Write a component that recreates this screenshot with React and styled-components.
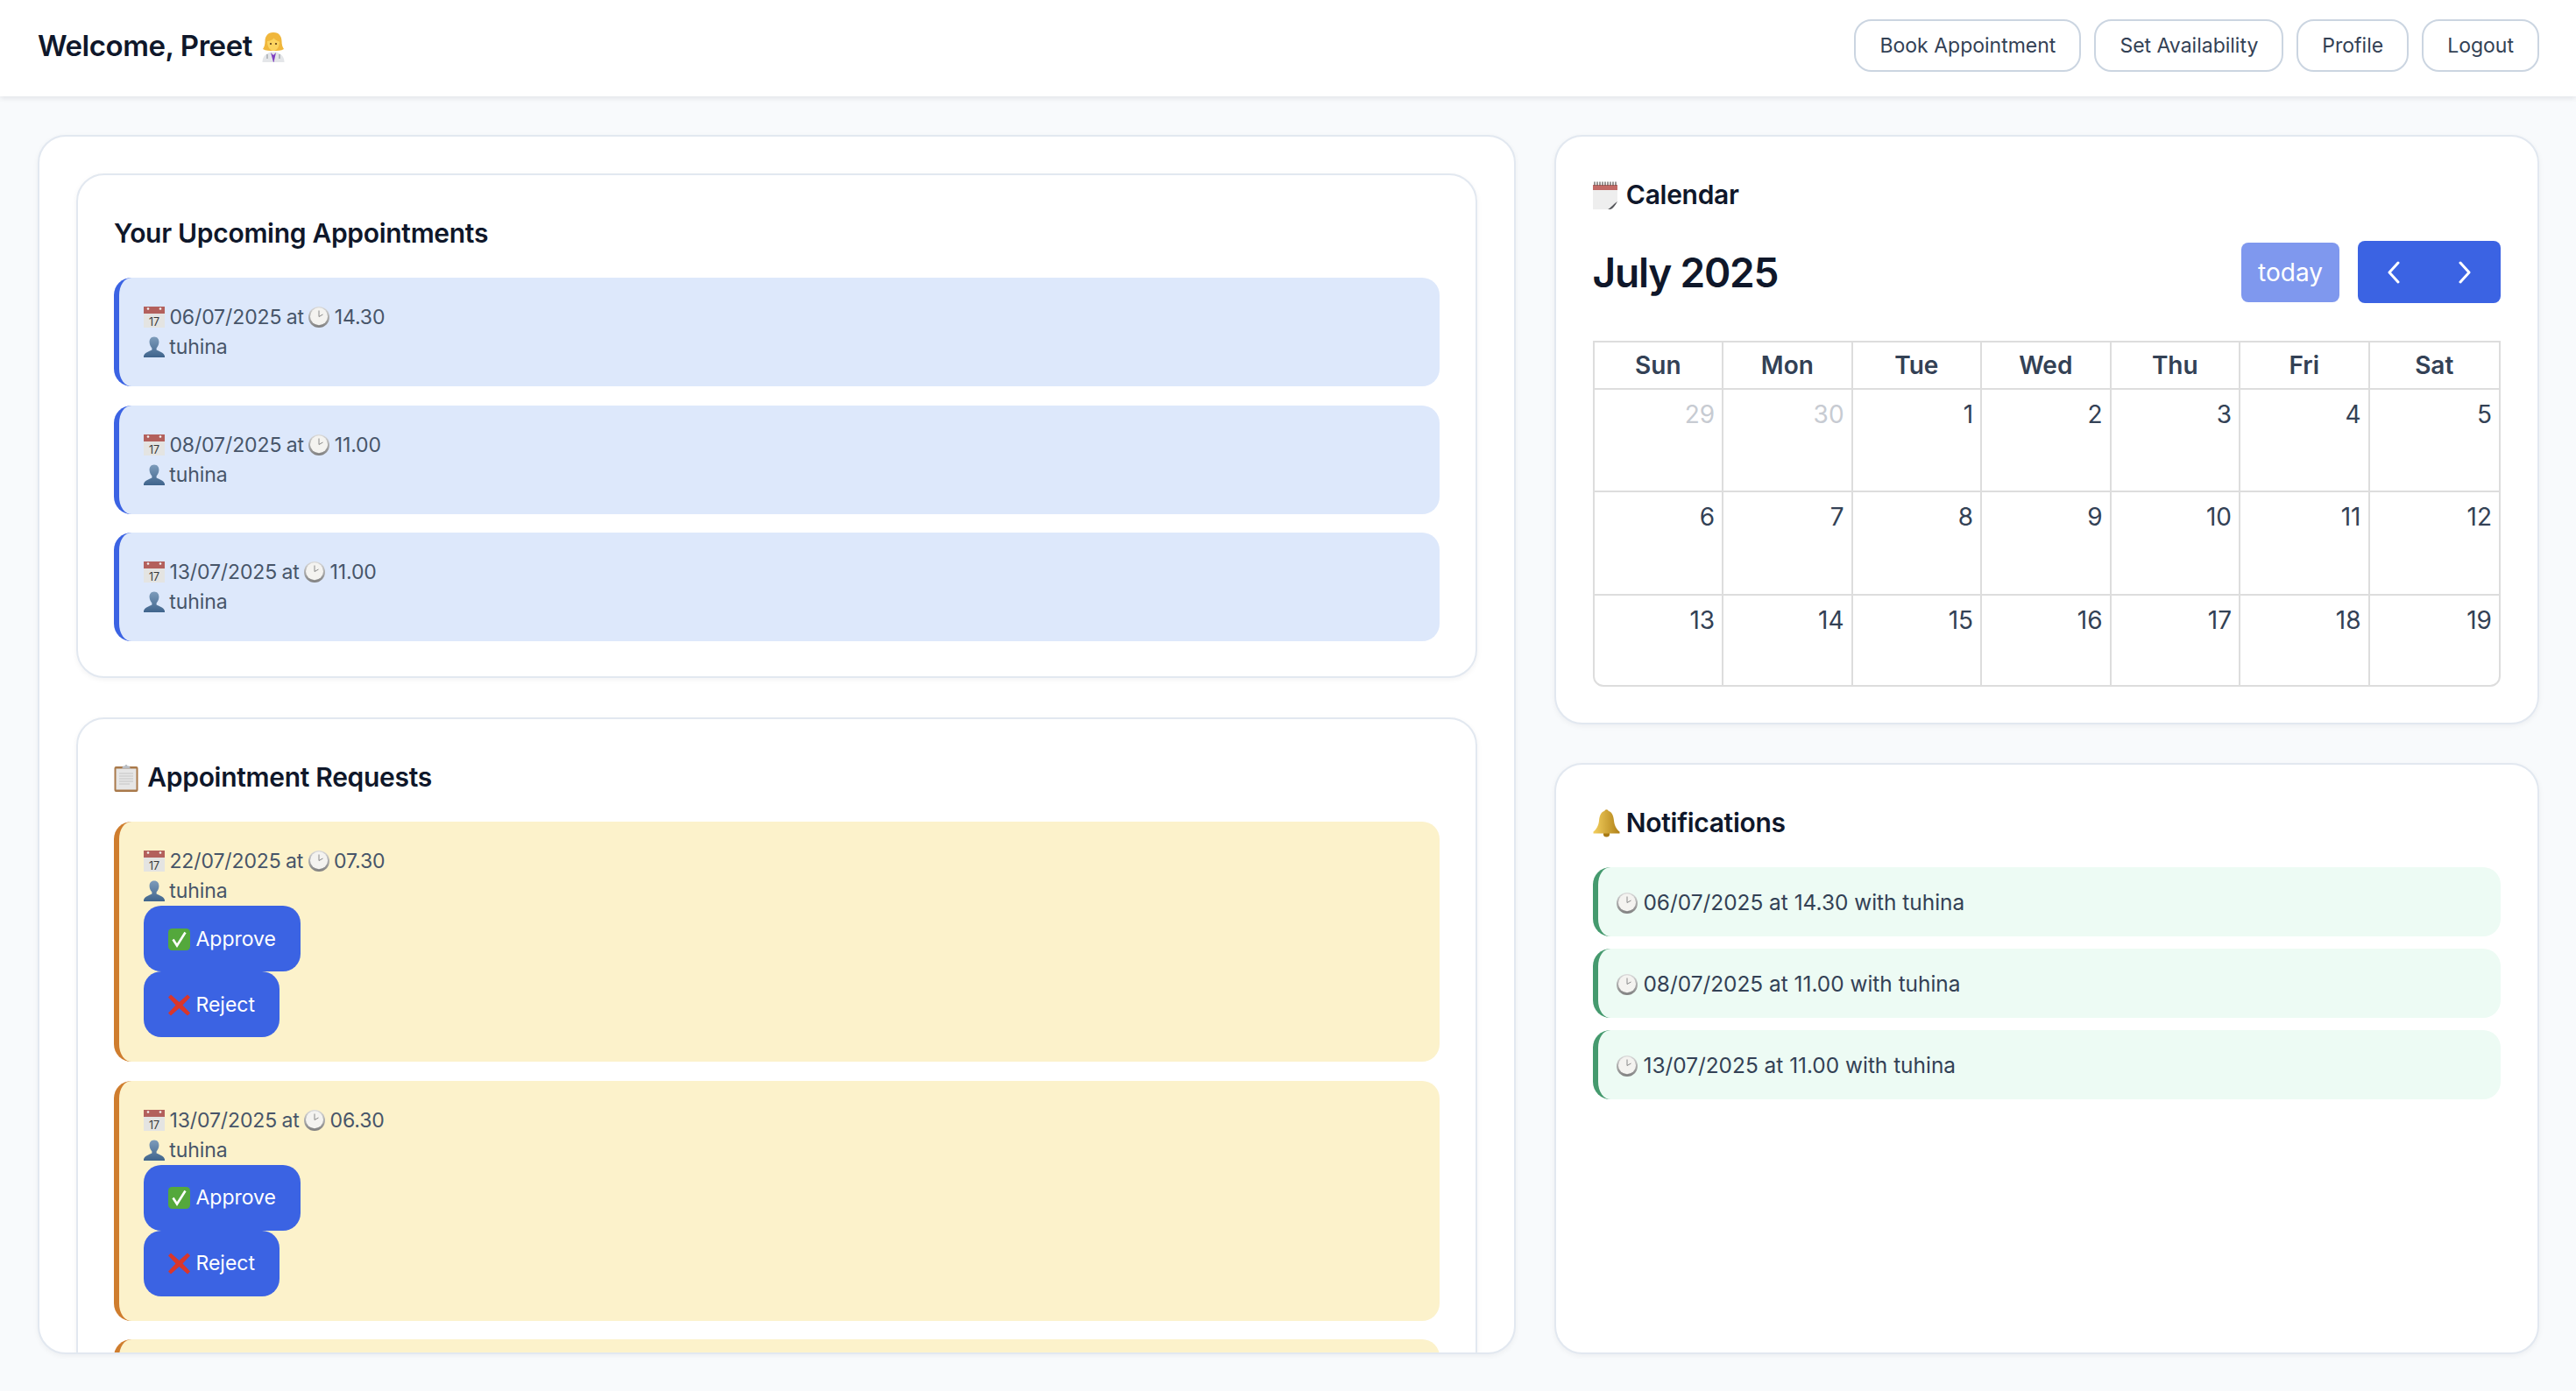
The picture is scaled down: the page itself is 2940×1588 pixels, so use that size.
import React from "react"
import styled, { createGlobalStyle } from "styled-components"

const Global = createGlobalStyle`
  * {
    box-sizing: border-box;
  }
  html, body {
    margin: 0;
    height: 100%;
    overflow: hidden;
  }
  body {
    background: #f8fafc;
    font-family: Inter, "Liberation Sans", sans-serif;
    color: #0f172a;
  }
`

const Page = styled.div`
  height: 100vh;
  display: flex;
  flex-direction: column;
`

const Header = styled.header`
  height: 110px;
  flex: none;
  display: flex;
  align-items: center;
  justify-content: space-between;
  padding: 0 42px 6px 43px;
  background: #fff;
  box-shadow: 0 2px 6px rgba(15, 23, 42, 0.1);
`

const Welcome = styled.h1`
  margin: 0;
  font-size: 33px;
  font-weight: 600;
  line-height: 46px;
  letter-spacing: -0.45px;
`

const HeaderActions = styled.nav`
  display: flex;
  gap: 15px;
`

const HeaderButton = styled.button`
  height: 60px;
  padding: 0 27px;
  background: #fff;
  border: 2px solid #cbd5e1;
  border-radius: 20px;
  color: #334155;
  font: 400 23px Inter, sans-serif;
`

const Main = styled.main`
  flex: 1;
  min-height: 0;
  display: grid;
  grid-template-columns: 3fr 2fr;
  gap: 44px;
  padding: 44px 42px 42px 43px;
`

const Panel = styled.section`
  background: #fff;
  border: 2px solid #e2e8f0;
  border-radius: 32px;
  box-shadow: 0 2px 6px rgba(15, 23, 42, 0.05);
  padding: 42px;
`

const LeftPanel = styled(Panel)`
  overflow: hidden;
  padding-bottom: 0;
`

const CalendarPanel = styled(Panel)`
  padding-bottom: 41px;
`

const RightColumn = styled.div`
  display: flex;
  flex-direction: column;
  gap: 44px;
  min-height: 0;
`

const NotificationsPanel = styled(Panel)`
  flex: 1;
`

const InnerCard = styled(Panel)`
  padding: 42px 41px 40px;
  margin-bottom: 45px;
`

const Heading = styled.h2`
  margin: 0 0 ${({ $gap }) => $gap || 27}px;
  font-size: 30px;
  font-weight: 600;
  line-height: 48px;
  letter-spacing: -0.3px;
`

const ItemList = styled.div`
  display: flex;
  flex-direction: column;
  gap: ${({ $gap }) => $gap}px;
`

const Item = styled.div`
  background: ${({ $bg }) => $bg};
  border-left: 6px solid ${({ $accent }) => $accent};
  border-radius: 20px;
  padding: 28px 28px;
  min-height: ${({ $minHeight }) => $minHeight || 0}px;
  color: #475569;
  font-size: 23px;
  line-height: 34px;
  letter-spacing: -0.1px;
  word-spacing: -1px;
`

const NoticeItem = styled(Item)`
  padding: 22.5px 21px;
  color: #334155;
  background: #edfbf4;
  border-left-color: #459a6e;
  font-size: 24.4px;
  letter-spacing: 0;
  word-spacing: 0;
`

const Line = styled.div``

const ActionButton = styled.button`
  display: block;
  height: 75px;
  padding: 0 28px;
  background: #3b63e3;
  color: #fff;
  border: 0;
  border-radius: 20px;
  font: 400 23px Inter, sans-serif;
`

const Toolbar = styled.div`
  display: flex;
  align-items: center;
  justify-content: space-between;
  height: 71px;
  margin-bottom: 43px;
`

const MonthTitle = styled.h2`
  margin: 0;
  font-size: 46px;
  font-weight: 600;
  letter-spacing: -1.2px;
`

const ToolbarRight = styled.div`
  display: flex;
  align-items: center;
  gap: 21px;
`

const TodayButton = styled.button`
  width: 112px;
  height: 68px;
  background: #7f98ee;
  border: 0;
  border-radius: 8px;
  color: #fff;
  font: 400 28px Inter, sans-serif;
`

const NavGroup = styled.div`
  display: flex;
  height: 71px;
  border-radius: 8px;
  overflow: hidden;
`

const NavButton = styled.button`
  width: 81.5px;
  display: flex;
  align-items: center;
  justify-content: center;
  background: #3b63e3;
  border: 0;
`

const CalendarFrame = styled.div`
  height: 395px;
  display: grid;
  grid-template-columns: repeat(7, 1fr);
  grid-template-rows: 54px 117px 118px 1fr;
  border: 2px solid #ddd;
  border-radius: 0 0 12px 12px;
  overflow: hidden;
  color: #334155;
`

const DayHead = styled.div`
  display: flex;
  align-items: center;
  justify-content: center;
  border-bottom: 2px solid #ddd;
  border-right: ${({ $last }) => ($last ? 0 : "2px solid #ddd")};
  font-size: 28px;
  font-weight: 600;
`

const DayCell = styled.div`
  padding: 7px 8px;
  text-align: right;
  font-size: 28px;
  line-height: 42px;
  color: ${({ $muted }) => ($muted ? "#c7cbd2" : "#334155")};
  border-right: ${({ $last }) => ($last ? 0 : "2px solid #ddd")};
  border-bottom: ${({ $bottom }) => ($bottom ? 0 : "2px solid #ddd")};
`

const Glyph = styled.svg`
  display: inline-block;
  vertical-align: ${({ $drop }) => $drop || -4}px;
  margin-left: ${({ $before }) => $before || 0}px;
  margin-right: ${({ $after }) => $after || 0}px;
`

const CalendarIcon = () => (
  <Glyph width="24" height="24" viewBox="0 0 24 24">
    <rect x="0" y="6" width="24" height="18" fill="#e4e4e2" />
    <rect x="0" y="0" width="24" height="8" fill="#b3605c" />
    <circle cx="5" cy="2.5" r="1.3" fill="#f3f3f3" />
    <circle cx="19" cy="2.5" r="1.3" fill="#f3f3f3" />
    <text x="12" y="21.5" textAnchor="middle" fontFamily="Inter" fontSize="12.5" fill="#3a3a3a">17</text>
  </Glyph>
)

const ClockIcon = () => (
  <Glyph width="24" height="24" viewBox="0 0 24 24">
    <defs>
      <linearGradient id="clockRim" x1="0" y1="0" x2="0" y2="1">
        <stop offset="0" stopColor="#dcdcdc" />
        <stop offset="1" stopColor="#7f7f7f" />
      </linearGradient>
    </defs>
    <circle cx="12" cy="12" r="12" fill="url(#clockRim)" />
    <circle cx="12" cy="11.3" r="10" fill="#f4f3f0" />
    <path d="M12 4.5V11.5L16.5 9" stroke="#8a8a8a" strokeWidth="1" fill="none" />
  </Glyph>
)

const BustIcon = () => (
  <Glyph width="24" height="24" viewBox="0 0 24 24">
    <defs>
      <linearGradient id="bustFill" x1="0" y1="0" x2="0" y2="1">
        <stop offset="0" stopColor="#7d9cbb" />
        <stop offset="1" stopColor="#3f648c" />
      </linearGradient>
    </defs>
    <path
      d="M12 0.5C8.2 0.5 6.4 3.4 6.6 7C6.8 10 8.2 12.2 9.4 13.4V15.4C7 17 1 17.8 0 22.5V24H24V22.5C23 17.8 17 17 14.6 15.4V13.4C15.8 12.2 17.2 10 17.4 7C17.6 3.4 15.8 0.5 12 0.5Z"
      fill="url(#bustFill)"
    />
  </Glyph>
)

const DoctorIcon = () => (
  <Glyph width="26" height="34" viewBox="0 0 26 34" $drop={-7} $before={3}>
    <path d="M13 0C6 0 3.5 5 3.5 10C3.5 14 2.5 17 1 19C4 21 9 21 13 21C17 21 22 21 25 19C23.5 17 22.5 14 22.5 10C22.5 5 20 0 13 0Z" fill="#f0b73c" />
    <path d="M6 10C9 10 12 8.5 13.5 6.5C15 8.5 17.5 10 20 10.5C20 17 16.5 21 13 21C9.5 21 6 17 6 10Z" fill="#fcd460" />
    <circle cx="10" cy="13" r="1.1" fill="#5a3b1a" />
    <circle cx="16" cy="13" r="1.1" fill="#5a3b1a" />
    <path d="M0.5 34C0.5 27 5 24 9.5 22.5H16.5C21 24 25.5 27 25.5 34Z" fill="#e4e6e9" />
    <path d="M10 23L13 34H13.5L16 23L13 26Z" fill="#7f3fc0" />
    <path d="M6 25V30M20 25V30" stroke="#8a8f96" strokeWidth="1" />
  </Glyph>
)

const TearCalendarIcon = () => (
  <Glyph width="28" height="32" viewBox="0 0 28 32" $drop={-6} $after={3}>
    <rect x="0" y="4" width="28" height="28" fill="#eeeeee" />
    <rect x="0" y="4" width="28" height="6" fill="#c26a66" />
    <path d="M2 0.5V5M5 0.5V5M8 0.5V5M11 0.5V5M14 0.5V5M17 0.5V5M20 0.5V5M23 0.5V5M26 0.5V5" stroke="#55524f" strokeWidth="1.2" />
    <path d="M17 32C22 31 24 27 28 23V32Z" fill="#ffffff" />
    <path d="M17 32C21 30 23 26 28 23C25 28 23 31 20 32Z" fill="#55565a" />
  </Glyph>
)

const ClipboardIcon = () => (
  <Glyph width="28" height="32" viewBox="0 0 28 32" $drop={-6} $after={3}>
    <rect x="0.5" y="3" width="27" height="29" rx="2" fill="#a9794a" />
    <rect x="2.5" y="5.5" width="23" height="24" fill="#e6e6e6" />
    <path d="M6 11H22M6 14H22M6 17H22M6 20H22M6 23H18" stroke="#cfcfcf" strokeWidth="1.4" />
    <path d="M9 5.5L10.5 2.5H12.5C12.7 0.6 15.3 0.6 15.5 2.5H17.5L19 5.5Z" fill="#b8bcc2" />
  </Glyph>
)

const BellIcon = () => (
  <Glyph width="31" height="32" viewBox="0 0 31 32" $drop={-6}>
    <defs>
      <linearGradient id="bellFill" x1="0" y1="0" x2="1" y2="0">
        <stop offset="0" stopColor="#f3cf5e" />
        <stop offset="1" stopColor="#b08118" />
      </linearGradient>
    </defs>
    <circle cx="15.5" cy="28" r="3.6" fill="#a87a14" />
    <circle cx="15.5" cy="2.4" r="2.2" fill="#c99a28" />
    <path d="M15.5 1.5C9.5 1.5 7.5 7 7 13C6.6 18 4 23 0.5 25.5V27.5H30.5V25.5C27 23 24.4 18 24 13C23.5 7 21.5 1.5 15.5 1.5Z" fill="url(#bellFill)" />
  </Glyph>
)

const CheckIcon = () => (
  <Glyph width="25" height="25" viewBox="0 0 25 25" $drop={-5}>
    <rect x="0" y="0" width="25" height="25" rx="4.5" fill="#54a83c" />
    <path d="M5.5 12.5L10 19.5L19.5 4.5" stroke="#fff" strokeWidth="2.6" fill="none" />
  </Glyph>
)

const CrossIcon = () => (
  <Glyph width="25" height="25" viewBox="0 0 25 25" $drop={-5}>
    <path d="M3 0.5L12.5 9L22 0.5L25 3.5L16.5 12.5L25 21.5L22 24.5L12.5 16L3 24.5L0 21.5L8.5 12.5L0 3.5Z" fill="#d9362b" />
  </Glyph>
)

const ChevronIcon = ({ flip }) => (
  <svg width="14" height="26" viewBox="0 0 14 26">
    <path d={flip ? "M12 2L2 13L12 24" : "M2 2L12 13L2 24"} stroke="#fff" strokeWidth="3" strokeLinecap="round" strokeLinejoin="round" fill="none" />
  </svg>
)

const upcoming = [
  { date: "06/07/2025", time: "14.30" },
  { date: "08/07/2025", time: "11.00" },
  { date: "13/07/2025", time: "11.00" },
]

const requests = [
  { date: "22/07/2025", time: "07.30" },
  { date: "13/07/2025", time: "06.30" },
]

const days = ["Sun", "Mon", "Tue", "Wed", "Thu", "Fri", "Sat"]
const dates = [29, 30, 1, 2, 3, 4, 5, 6, 7, 8, 9, 10, 11, 12, 13, 14, 15, 16, 17, 18, 19]

const Details = ({ date, time }) => (
  <>
    <Line>
      <CalendarIcon /> {date} at <ClockIcon /> {time}
    </Line>
    <Line>
      <BustIcon /> tuhina
    </Line>
  </>
)

export default function App() {
  return (
    <Page>
      <Global />
      <Header>
        <Welcome>
          Welcome, Preet <DoctorIcon />
        </Welcome>
        <HeaderActions>
          <HeaderButton>Book Appointment</HeaderButton>
          <HeaderButton>Set Availability</HeaderButton>
          <HeaderButton>Profile</HeaderButton>
          <HeaderButton>Logout</HeaderButton>
        </HeaderActions>
      </Header>
      <Main>
        <LeftPanel>
          <InnerCard>
            <Heading>Your Upcoming Appointments</Heading>
            <ItemList $gap={21.5}>
              {upcoming.map((a) => (
                <Item key={a.date} $bg="#dde8fb" $accent="#3b63e3">
                  <Details {...a} />
                </Item>
              ))}
            </ItemList>
          </InnerCard>
          <InnerCard>
            <Heading>
              <ClipboardIcon /> Appointment Requests
            </Heading>
            <ItemList $gap={21.5}>
              {requests.map((a, i) => (
                <Item key={i} $bg="#fcf2cb" $accent="#cf7d2e">
                  <Details {...a} />
                  <ActionButton>
                    <CheckIcon /> Approve
                  </ActionButton>
                  <ActionButton>
                    <CrossIcon /> Reject
                  </ActionButton>
                </Item>
              ))}
              <Item $bg="#fcf2cb" $accent="#cf7d2e" $minHeight={274} />
            </ItemList>
          </InnerCard>
        </LeftPanel>
        <RightColumn>
          <CalendarPanel>
            <Heading $gap={29}>
              <TearCalendarIcon /> Calendar
            </Heading>
            <Toolbar>
              <MonthTitle>July 2025</MonthTitle>
              <ToolbarRight>
                <TodayButton>today</TodayButton>
                <NavGroup>
                  <NavButton>
                    <ChevronIcon flip />
                  </NavButton>
                  <NavButton>
                    <ChevronIcon />
                  </NavButton>
                </NavGroup>
              </ToolbarRight>
            </Toolbar>
            <CalendarFrame>
              {days.map((d, i) => (
                <DayHead key={d} $last={i === 6}>
                  {d}
                </DayHead>
              ))}
              {dates.map((d, i) => (
                <DayCell key={i} $muted={i < 2} $last={i % 7 === 6} $bottom={i >= 14}>
                  {d}
                </DayCell>
              ))}
            </CalendarFrame>
          </CalendarPanel>
          <NotificationsPanel>
            <Heading>
              <BellIcon /> Notifications
            </Heading>
            <ItemList $gap={14}>
              {upcoming.map((a) => (
                <NoticeItem key={a.date}>
                  <ClockIcon /> {a.date} at {a.time} with tuhina
                </NoticeItem>
              ))}
            </ItemList>
          </NotificationsPanel>
        </RightColumn>
      </Main>
    </Page>
  )
}
